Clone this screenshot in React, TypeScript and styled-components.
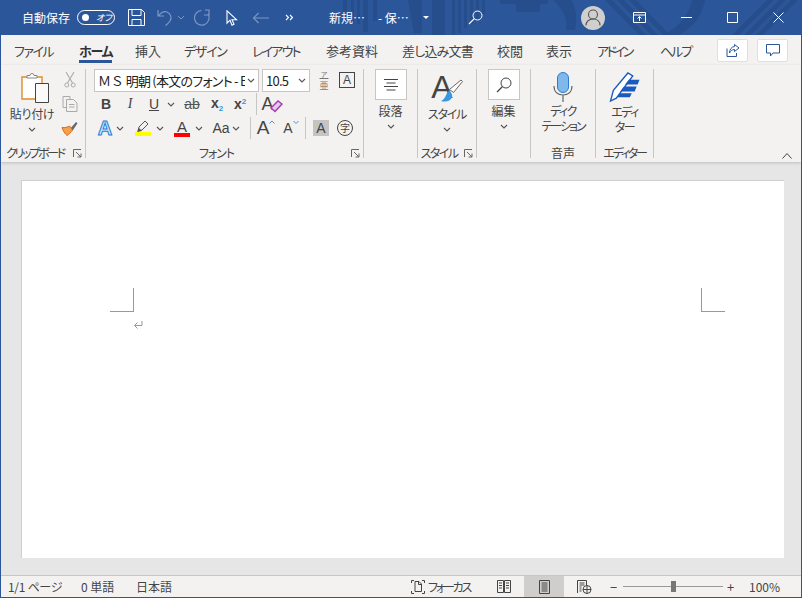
import React from "react";
import styled, { createGlobalStyle } from "styled-components";

const blue = "#2b579a";
const ink = "#444";

const tabs = [
  { label: "ファイル", w: 38, next: 27, ls: -1.5 },
  { label: "ホーム", w: 33, next: 23, ls: -1.3, active: true },
  { label: "挿入", w: 25, next: 24 },
  { label: "デザイン", w: 42, next: 26, ls: -1.25 },
  { label: "レイアウト", w: 48, next: 26, ls: -1.8 },
  { label: "参考資料", w: 52, next: 24 },
  { label: "差し込み文書", w: 71, next: 24, ls: -0.8 },
  { label: "校閲", w: 25, next: 24 },
  { label: "表示", w: 26, next: 25 },
  { label: "アドイン", w: 38, next: 25, ls: -2.7 },
  { label: "ヘルプ", w: 32, next: 0, ls: -2 },
];

const Global = createGlobalStyle`
  html, body { margin: 0; padding: 0; height: 100%; overflow: hidden; }
  body {
    font-family: "Noto Sans CJK JP", "Noto Sans", sans-serif;
    font-feature-settings: "palt";
    color: #444;
  }
`;

const Chevron = () => (
  <svg width="8" height="5" viewBox="0 0 8 5">
    <path d="M1 1l3 3 3-3" fill="none" stroke="#555" strokeWidth="1.1" />
  </svg>
);

const Launcher = () => (
  <svg width="9" height="9" viewBox="0 0 9 9">
    <path d="M.5 8V.5H8M3 3l5 5M8 4.5V8H4.5" fill="none" stroke="#666" />
  </svg>
);

export default function App() {
  return (
    <Window>
      <Global />
      <TitleBar>
        <TitleArt width="472" height="35" viewBox="0 0 472 35">
          <g fill="#264e8c">
            <path d="M13 0h4v24h-4zM21 0h3v24h-3zM27 0h3v24h-3zM33 0h5v32h-5zM43 0h4v21h-4z" />
            <path d="M78 0h14v33h-8zM102 0h13v35h-13z" />
            <path d="M122 0h3v35h-3zM128 0h3v33h-3zM134 0h3v28h-3zM140 0h3v24h-3zM146 0h3v20h-3zM152 0h3v14h-3z" />
            <path d="M170 0h48v4h-8v8h-24v-8h-16z" />
            <path d="M223 0h18c6 8 6 20 4 30h-9c2-10-2-20-13-30z" />
            <path d="M275 0h7l34 35h-7zM287 0h7l34 35h-7zM299 0h7l34 35h-7z" />
            <path d="M362 0h13c-3 16-12 28-26 35h-16c16-8 26-20 29-35z" />
            <path d="M402 35l35-35h7l-35 35zM414 35l35-35h7l-35 35zM426 35l35-35h7l-35 35z" />
          </g>
        </TitleArt>
        <AutoSave>自動保存</AutoSave>
        <Toggle>
          <ToggleKnob />
          <ToggleText>オフ</ToggleText>
        </Toggle>
        <QuickIcon $w={17} $ml={13}>
          <svg width="17" height="17" viewBox="0 0 17 17">
            <path d="M.5.5h13l3 3v13H.5zM4 .5v6h9v-6M4 16.5v-6h9v6" fill="none" stroke="#fff" />
          </svg>
        </QuickIcon>
        <QuickIcon $w={16} $ml={12}>
          <svg width="16" height="17" viewBox="0 0 16 17">
            <path d="M1 1v6h6M1.5 7C4 3.5 7 2 10 3c4 1.5 5 6 3 9-1 1.5-2.5 3-4.5 4.5" fill="none" stroke="#7d97c2" strokeWidth="1.2" />
          </svg>
        </QuickIcon>
        <QuickIcon $w={8} $ml={4}>
          <svg width="8" height="5" viewBox="0 0 8 5">
            <path d="M1 1l3 3 3-3" fill="none" stroke="#7d97c2" />
          </svg>
        </QuickIcon>
        <QuickIcon $w={17} $ml={8}>
          <svg width="17" height="17" viewBox="0 0 17 17">
            <path d="M12 1h4v5h-5M15 5A7.3 7.3 0 1 1 8.5 1.5" fill="none" stroke="#7d97c2" strokeWidth="1.2" />
          </svg>
        </QuickIcon>
        <QuickIcon $w={12} $ml={16}>
          <svg width="12" height="16" viewBox="0 0 12 16">
            <path d="M1 .8v12.4l3-3 2 5 2-1-2-4.5h4.5z" fill="#2b579a" stroke="#fff" strokeWidth="1.1" />
          </svg>
        </QuickIcon>
        <QuickIcon $w={17} $ml={14}>
          <svg width="17" height="12" viewBox="0 0 17 12">
            <path d="M17 6H1.5M6.5 1l-5 5 5 5" fill="none" stroke="#7d97c2" strokeWidth="1.2" />
          </svg>
        </QuickIcon>
        <QuickIcon $w={9} $ml={16}>
          <svg width="9" height="7" viewBox="0 0 9 7">
            <path d="M1 1l2.5 2.5L1 6M5 1l2.5 2.5L5 6" fill="none" stroke="#fff" strokeWidth="1.1" />
          </svg>
        </QuickIcon>
        <DocTitle $w={36} $ml={35}>新規…</DocTitle>
        <DocTitle $w={30} $ml={13}>- 保…</DocTitle>
        <QuickIcon $w={6} $ml={15}>
          <svg width="6" height="3" viewBox="0 0 6 3">
            <path d="M0 0h6L3 3z" fill="#fff" />
          </svg>
        </QuickIcon>
        <QuickIcon $w={15} $ml={39}>
          <svg width="15" height="15" viewBox="0 0 15 15">
            <circle cx="9.5" cy="5.5" r="4.5" fill="none" stroke="#fff" />
            <path d="M6.3 8.7L1 14" stroke="#fff" strokeWidth="1.2" />
          </svg>
        </QuickIcon>
        <Avatar>
          <svg width="16" height="17" viewBox="0 0 16 17">
            <circle cx="8" cy="5.5" r="4.5" fill="none" stroke="#555" strokeWidth="1.1" />
            <path d="M1 16.5c0-4 3-6.5 7-6.5s7 2.5 7 6.5" fill="none" stroke="#555" strokeWidth="1.1" />
          </svg>
        </Avatar>
        <QuickIcon $w={13} $ml={28}>
          <svg width="13" height="11" viewBox="0 0 13 11">
            <path d="M.5.5h12v10H.5zM.5 3h12M6.5 9V4.5M4.5 6.5l2-2 2 2" fill="none" stroke="#fff" />
          </svg>
        </QuickIcon>
        <QuickIcon $w={11} $ml={35}>
          <svg width="11" height="1" viewBox="0 0 11 1">
            <path d="M0 .5h11" stroke="#fff" />
          </svg>
        </QuickIcon>
        <QuickIcon $w={11} $ml={35}>
          <svg width="11" height="11" viewBox="0 0 11 11">
            <path d="M.5.5h10v10H.5z" fill="none" stroke="#fff" />
          </svg>
        </QuickIcon>
        <QuickIcon $w={11} $ml={35}>
          <svg width="11" height="11" viewBox="0 0 11 11">
            <path d="M.5.5l10 10M10.5.5l-10 10" stroke="#fff" />
          </svg>
        </QuickIcon>
      </TitleBar>

      <TabBar>
        {tabs.map((t) => (
          <Tab key={t.label} $w={t.w} $next={t.next} $ls={t.ls} $active={t.active}>
            {t.label}
          </Tab>
        ))}
        <TabActions>
          <WhiteButton>
            <svg width="14" height="14" viewBox="0 0 14 14">
              <path d="M8.5 1.5L13 5 8.5 8.5V6.5C6 6.5 4.5 8 3.5 10 3.5 6.5 5.5 3.8 8.5 3.5zM1 5.5v8h9.5V10" fill="none" stroke="#2b579a" />
            </svg>
          </WhiteButton>
          <WhiteButton>
            <svg width="14" height="14" viewBox="0 0 14 14">
              <path d="M.5 1.5h13V10H7l-2.500 3v-3H.5z" fill="none" stroke="#2b579a" />
            </svg>
          </WhiteButton>
        </TabActions>
      </TabBar>

      <Ribbon>
        <Group $w={84}>
          <GroupBody>
            <ClipboardColumn>
              <ClipIcon>
                <svg width="28" height="30" viewBox="0 0 28 30">
                  <path d="M1 4h20v22H1z" fill="#fff" stroke="#e08a2b" strokeWidth="1.4" />
                  <path d="M6 5V2.5h3a2 2 0 0 1 4 0h3V5z" fill="#fff" stroke="#888" />
                  <path d="M14.5 10.5h13v19h-13z" fill="#fafafa" stroke="#444" />
                </svg>
              </ClipIcon>
              <BigLabel $ls={-0.3}>貼り付け</BigLabel>
              <ChevronRow><Chevron /></ChevronRow>
            </ClipboardColumn>
            <ClipTools>
              <svg width="12" height="17" viewBox="0 0 12 17">
                <path d="M2 1l6.5 11M10 1L3.5 12" stroke="#aaa" strokeWidth="1.1" />
                <circle cx="2.8" cy="14" r="2" fill="none" stroke="#aaa" />
                <circle cx="9.2" cy="14" r="2" fill="none" stroke="#aaa" />
              </svg>
              <svg width="16" height="16" viewBox="0 0 16 16">
                <path d="M1 .5h7v3M1 .5v11h3" fill="none" stroke="#aaa" />
                <path d="M4.5 3.5h7L15 7v8.500H4.500zM7 8.500h5.500M7 11h5.500" fill="#f3f2f1" stroke="#aaa" />
              </svg>
              <svg width="17" height="16" viewBox="0 0 17 16">
                <path d="M9 9l6-7 1.5 1.2-5 7.5z" fill="#666" />
                <path d="M1 7.5c3 .5 6-.5 7.5-1.5l3 4C10 12 8 14.5 6 15.5 4 14 2 10.500 1 7.500z" fill="#f5a04a" stroke="#d9691e" />
              </svg>
            </ClipTools>
          </GroupBody>
          <GroupFooter $ls={-2.3} $pl={4}>
            <span>クリップボード</span>
            <LauncherSlot><Launcher /></LauncherSlot>
          </GroupFooter>
        </Group>

        <Group $w={278}>
          <FontBody>
            <ToolRow>
              <SelectBox $w={165}>
                <SelectText>Ｍ Ｓ  明朝 (本文のフォント - E</SelectText>
                <Chevron />
              </SelectBox>
              <SelectBox $w={48}>
                <SelectText>10.5</SelectText>
                <Chevron />
              </SelectBox>
              <Tool $w={22}>
                <Ruby>
                  <small>ア</small>
                  <span>亜</span>
                </Ruby>
              </Tool>
              <Tool $w={16} $ml={4}><BoxedA>A</BoxedA></Tool>
            </ToolRow>
            <ToolRow>
              <Tool $w={24}><BoldLetter>B</BoldLetter></Tool>
              <Tool $w={24}><ItalicLetter>I</ItalicLetter></Tool>
              <Tool $w={24}><UnderLetter>U</UnderLetter></Tool>
              <Tool $w={10}><Chevron /></Tool>
              <Tool $w={28} $ml={2}><StrikeLetter>ab</StrikeLetter></Tool>
              <Tool $w={22}><BoldLetter>x<Sub>2</Sub></BoldLetter></Tool>
              <Tool $w={24}><BoldLetter>x<Sup>2</Sup></BoldLetter></Tool>
              <VSep $ml={4} />
              <Tool $w={30}>
                <Eraser>
                  <EraserA>A</EraserA>
                  <svg width="13" height="13" viewBox="0 0 13 13">
                    <path d="M1 8l7-7 4 3-7 7.5z" fill="#e7c8ee" stroke="#a23cb0" strokeWidth="1.4" />
                  </svg>
                </Eraser>
              </Tool>
            </ToolRow>
            <ToolRow>
              <Tool $w={22}><OutlineA>A</OutlineA></Tool>
              <Tool $w={8}><Chevron /></Tool>
              <Tool $w={22} $ml={8}>
                <ColorStack>
                  <svg width="15" height="12" viewBox="0 0 15 12">
                    <path d="M2 11l1-4 6-6 3 3-6 6z" fill="none" stroke="#555" />
                    <path d="M1 12l2-4 3 3z" fill="#555" />
                  </svg>
                  <ColorBar $c="#ffff00" />
                </ColorStack>
              </Tool>
              <Tool $w={8} $ml={2}><Chevron /></Tool>
              <Tool $w={22} $ml={7}>
                <ColorStack>
                  <PlainA>A</PlainA>
                  <ColorBar $c="#ff0000" />
                </ColorStack>
              </Tool>
              <Tool $w={8} $ml={2}><Chevron /></Tool>
              <Tool $w={28} $ml={4}><CaseText>Aa</CaseText></Tool>
              <Tool $w={8} $ml={-3}><Chevron /></Tool>
              <VSep $ml={10} />
              <Tool $w={24} $ml={3}>
                <GrowA>A</GrowA>
                <Caret width="6" height="4" viewBox="0 0 6 4"><path d="M.5 3.5L3 1l2.5 2.5" fill="none" stroke="#3a96dd" /></Caret>
              </Tool>
              <Tool $w={22} $ml={2}>
                <ShrinkA>A</ShrinkA>
                <Caret width="6" height="4" viewBox="0 0 6 4"><path d="M.5 1L3 3.5 5.5 1" fill="none" stroke="#3a96dd" /></Caret>
              </Tool>
              <VSep $ml={3} />
              <ShadedA>A</ShadedA>
              <Tool $w={16} $ml={8}><CircleChar>字</CircleChar></Tool>
            </ToolRow>
          </FontBody>
          <GroupFooter $ls={-1} $center $pr={16}>
            <span>フォント</span>
            <LauncherSlot><Launcher /></LauncherSlot>
          </GroupFooter>
        </Group>

        <Group $w={54}>
          <StackBody>
            <IconSquare>
              <svg width="14" height="12" viewBox="0 0 14 12">
                <path d="M0 .5h14M2.5 4h9M0 7.5h14M2.5 11h9" stroke="#444" />
              </svg>
            </IconSquare>
            <BigLabel>段落</BigLabel>
            <ChevronRow><Chevron /></ChevronRow>
          </StackBody>
        </Group>

        <Group $w={59}>
          <StackBody>
            <StyleIcon>
              <StyleA>A</StyleA>
              <svg width="24" height="24" viewBox="0 0 24 24">
                <path d="M22 1l1.5 1.5-9 11-4-3z" fill="#fff" stroke="#666" />
                <path d="M2 22c4 1.5 10 0 11-4 .5-2-.5-4-2.5-6-3.500 0-3 8-8.500 10z" fill="#3a96dd" />
              </svg>
            </StyleIcon>
            <BigLabel $ls={-1.2}>スタイル</BigLabel>
            <ChevronRow><Chevron /></ChevronRow>
          </StackBody>
          <GroupFooter $ls={-1.6} $center $pr={16}>
            <span>スタイル</span>
            <LauncherSlot><Launcher /></LauncherSlot>
          </GroupFooter>
        </Group>

        <Group $w={54}>
          <StackBody>
            <IconSquare>
              <svg width="16" height="16" viewBox="0 0 16 16">
                <circle cx="10" cy="6" r="5" fill="none" stroke="#444" />
                <path d="M6.5 9.5L1 15" stroke="#444" strokeWidth="1.2" />
              </svg>
            </IconSquare>
            <BigLabel>編集</BigLabel>
            <ChevronRow><Chevron /></ChevronRow>
          </StackBody>
        </Group>

        <Group $w={65}>
          <StackBody $pt={3} $gap={1}>
            <svg width="20" height="30" viewBox="0 0 20 30">
              <rect x="4.5" y="0.5" width="11" height="20" rx="5.5" fill="#7fb9ec" stroke="#2b7cd3" />
              <path d="M1 14c0 6 4 9 9 9s9-3 9-9M10 23v7" fill="none" stroke="#666" strokeWidth="1.2" />
            </svg>
            <TwoLine>
              <LineSpan $ls={-1.5}>ディク</LineSpan>
              <LineSpan $ls={-2}>テーション</LineSpan>
            </TwoLine>
          </StackBody>
          <GroupFooter $center><span>音声</span></GroupFooter>
        </Group>

        <Group $w={58}>
          <StackBody $pt={3} $gap={1}>
            <svg width="32" height="31" viewBox="0 0 32 32">
              <path d="M1 30l3-11L19 1l5 3L7 27z" fill="#fff" stroke="#185abd" strokeWidth="1.4" />
              <path d="M20 8h11l-2 5H16zM15 15h13l-2 5H11zM11 22h12l-2 4H8z" fill="#185abd" />
            </svg>
            <TwoLine>
              <LineSpan $ls={-1.5}>エディ</LineSpan>
              <LineSpan $ls={-1.5}>ター</LineSpan>
            </TwoLine>
          </StackBody>
          <GroupFooter $ls={-2.2} $center><span>エディター</span></GroupFooter>
        </Group>

        <Collapse>
          <svg width="10" height="6" viewBox="0 0 10 6">
            <path d="M.5 5.5l4.500-5 4.500 5" fill="none" stroke="#444" />
          </svg>
        </Collapse>
      </Ribbon>

      <Canvas>
        <Page>
          <Margins>
            <CropMark $side="left" />
            <CropMark $side="right" />
          </Margins>
          <ReturnMark>
            <svg width="10" height="9" viewBox="0 0 10 9">
              <path d="M9 1v4.5H2M4.500 2.500l-3 3 3 3" fill="none" stroke="#999" />
            </svg>
          </ReturnMark>
        </Page>
      </Canvas>

      <StatusBar>
        <StatusText $w={73} $ls={-0.3}>1/1 ページ</StatusText>
        <StatusText $w={55}>0 単語</StatusText>
        <StatusText $w={275}>日本語</StatusText>
        <FocusGroup>
          <FocusIcon width="14" height="14" viewBox="0 0 14 14">
            <path d="M.5 3V.5H3M.5 11v2.5H3M11 13.5h2.5V11M13.5 3V.5H11M4 11.500V1.500h4l2.500 2.500v7.500zM7.500 1.500v3h3" fill="none" stroke="#444" />
          </FocusIcon>
          <FocusText>フォーカス</FocusText>
        </FocusGroup>
        <ViewButton>
          <svg width="14" height="13" viewBox="0 0 14 13">
            <path d="M.5.5h6v12h-6zM7.5.5h6v12h-6zM2 3h3M2 5.5h3M2 8h3M9 3h3M9 5.5h3M9 8h3" fill="none" stroke="#444" />
          </svg>
        </ViewButton>
        <ViewButton $active>
          <svg width="11" height="14" viewBox="0 0 11 14">
            <path d="M.5.5h10v13H.5zM2.500 3h6M2.500 5h6M2.500 7h6M2.500 9h6M2.500 11h6" fill="none" stroke="#444" />
          </svg>
        </ViewButton>
        <ViewButton>
          <svg width="15" height="14" viewBox="0 0 15 14">
            <path d="M.5 13V.5h9V6M2.500 3h5M2.500 5h5M2.500 7h2M2.500 9h2M2.500 11h2" fill="none" stroke="#444" />
            <circle cx="10" cy="9.5" r="4" fill="#f3f2f1" stroke="#444" />
            <path d="M6 9.5h8M10 5.5v8" stroke="#444" />
          </svg>
        </ViewButton>
        <ZoomMinus>−</ZoomMinus>
        <Slider>
          <SliderThumb />
        </Slider>
        <ZoomPlus>+</ZoomPlus>
        <ZoomValue>100%</ZoomValue>
      </StatusBar>
    </Window>
  );
}

const Window = styled.div`
  width: 802px;
  height: 598px;
  box-sizing: border-box;
  border: solid ${blue};
  border-width: 0 1px 1px 1px;
  display: flex;
  flex-direction: column;
  background: #e6e6e6;
  overflow: hidden;
`;

const TitleBar = styled.div`
  position: relative;
  height: 35px;
  flex: none;
  display: flex;
  align-items: center;
  margin: 0 -1px;
  padding-left: 22px;
  background: ${blue};
  color: #fff;
  & > *:not(svg) { position: relative; }
`;

const TitleArt = styled.svg`
  position: absolute;
  right: 0;
  top: 0;
`;

const AutoSave = styled.span`
  font-size: 12px;
  width: 48px;
  white-space: nowrap;
`;

const Toggle = styled.div`
  margin-left: 7px;
  width: 38px;
  height: 15px;
  box-sizing: border-box;
  border: 1px solid #fff;
  border-radius: 8px;
  display: flex;
  align-items: center;
  padding-left: 4px;
`;

const ToggleKnob = styled.i`
  width: 7px;
  height: 7px;
  border-radius: 50%;
  background: #fff;
`;

const ToggleText = styled.span`
  font-size: 9px;
  font-style: italic;
  margin-left: 7px;
  white-space: nowrap;
`;

const QuickIcon = styled.div<{ $w: number; $ml: number }>`
  width: ${(p) => p.$w}px;
  margin-left: ${(p) => p.$ml}px;
  flex: none;
  display: flex;
  align-items: center;
  justify-content: center;
`;

const DocTitle = styled.span<{ $ml: number; $w: number }>`
  margin-left: ${(p) => p.$ml}px;
  width: ${(p) => p.$w}px;
  flex: none;
  font-size: 12px;
  white-space: nowrap;
`;

const Avatar = styled.div`
  margin-left: 98px;
  width: 24px;
  height: 24px;
  flex: none;
  border-radius: 50%;
  background: #cfcfcf;
  display: flex;
  align-items: center;
  justify-content: center;
`;

const TabBar = styled.div`
  height: 30px;
  flex: none;
  display: flex;
  align-items: center;
  padding-left: 13px;
  background: #f3f2f1;
`;

const Tab = styled.div<{ $w: number; $next: number; $ls?: number; $active?: boolean }>`
  position: relative;
  width: ${(p) => p.$w}px;
  margin-right: ${(p) => p.$next}px;
  flex: none;
  font-size: 13px;
  letter-spacing: ${(p) => p.$ls ?? 0}px;
  line-height: 31px;
  height: 30px;
  color: ${(p) => (p.$active ? "#333" : ink)};
  font-weight: ${(p) => (p.$active ? 700 : 400)};
  white-space: nowrap;
  &::after {
    content: "";
    display: ${(p) => (p.$active ? "block" : "none")};
    position: absolute;
    left: 0;
    right: 0;
    bottom: 2px;
    height: 3px;
    background: ${blue};
  }
`;

const TabActions = styled.div`
  margin-left: auto;
  margin-right: 13px;
  display: flex;
  gap: 9px;
`;

const WhiteButton = styled.div`
  width: 31px;
  height: 23px;
  box-sizing: border-box;
  background: #fff;
  border: 1px solid #e1dfdd;
  border-radius: 2px;
  display: flex;
  align-items: center;
  justify-content: center;
`;

const Ribbon = styled.div`
  position: relative;
  height: 97px;
  flex: none;
  display: flex;
  padding: 4px 0 4px 1px;
  box-sizing: border-box;
  background: #f3f2f1;
  box-shadow: 0 1px 3px rgba(0, 0, 0, 0.18);
  z-index: 1;
`;

const Group = styled.div<{ $w: number }>`
  width: ${(p) => p.$w}px;
  flex: none;
  box-sizing: border-box;
  border-right: 1px solid #c8c6c4;
  display: flex;
  flex-direction: column;
`;

const GroupBody = styled.div`
  flex: 1;
  display: flex;
`;

const ClipboardColumn = styled.div`
  width: 56px;
  display: flex;
  flex-direction: column;
  align-items: center;
  padding: 4px 0 0 4px;
  box-sizing: border-box;
`;

const ClipIcon = styled.div`
  display: flex;
  margin-left: 5px;
`;

const BigLabel = styled.div<{ $ls?: number }>`
  font-size: 12px;
  letter-spacing: ${(p) => p.$ls ?? 0}px;
  line-height: 16px;
  margin-top: 3px;
  white-space: nowrap;
`;

const ChevronRow = styled.div`
  height: 14px;
  display: flex;
  align-items: center;
  justify-content: center;
`;

const ClipTools = styled.div`
  width: 23px;
  padding-top: 2px;
  display: flex;
  flex-direction: column;
  align-items: center;
  gap: 8px;
`;

const GroupFooter = styled.div<{ $center?: boolean; $ls?: number; $pl?: number; $pr?: number }>`
  position: relative;
  height: 17px;
  flex: none;
  font-size: 12px;
  letter-spacing: ${(p) => p.$ls ?? 0}px;
  line-height: 24px;
  white-space: nowrap;
  text-align: ${(p) => (p.$center ? "center" : "left")};
  padding-left: ${(p) => p.$pl ?? 0}px;
  padding-right: ${(p) => p.$pr ?? 0}px;
`;

const LauncherSlot = styled.span`
  position: absolute;
  right: 3px;
  top: 8px;
  display: flex;
`;

const FontBody = styled.div`
  flex: 1;
  padding-left: 8px;
  display: flex;
  flex-direction: column;
  gap: 2px;
`;

const ToolRow = styled.div`
  height: 22px;
  display: flex;
  align-items: center;
`;

const SelectBox = styled.div<{ $w: number }>`
  width: ${(p) => p.$w}px;
  height: 23px;
  flex: none;
  box-sizing: border-box;
  margin-right: 3px;
  background: #fff;
  border: 1px solid #c8c6c4;
  display: flex;
  align-items: center;
  padding: 0 3px;
  gap: 2px;
`;

const SelectText = styled.span`
  flex: 1;
  min-width: 0;
  overflow: hidden;
  font-size: 13px;
  letter-spacing: -0.75px;
  white-space: pre;
  color: #222;
`;

const Tool = styled.div<{ $w: number; $ml?: number }>`
  width: ${(p) => p.$w}px;
  margin-left: ${(p) => p.$ml ?? 0}px;
  height: 22px;
  flex: none;
  display: flex;
  align-items: center;
  justify-content: center;
`;

const Caret = styled.svg`
  align-self: flex-start;
  margin-top: 3px;
`;

const Ruby = styled.div`
  display: flex;
  flex-direction: column;
  align-items: center;
  color: #777;
  small { font-size: 7px; line-height: 10px; }
  span { font-size: 9px; line-height: 13px; text-decoration: overline; }
`;

const BoxedA = styled.div`
  width: 16px;
  height: 16px;
  box-sizing: border-box;
  border: 1px solid #444;
  font: 12px/14px "Liberation Sans", sans-serif;
  text-align: center;
`;

const BoldLetter = styled.span`
  font: 700 14px "Liberation Sans", sans-serif;
  color: #444;
`;

const ItalicLetter = styled.span`
  font: italic 14px "Liberation Serif", serif;
`;

const UnderLetter = styled.span`
  font: 14px "Liberation Sans", sans-serif;
  text-decoration: underline;
`;

const StrikeLetter = styled.span`
  font: 14px "Liberation Sans", sans-serif;
  text-decoration: line-through;
  color: #555;
`;

const Sub = styled.span`
  font-size: 8px;
  color: #3a96dd;
  vertical-align: -3px;
`;

const Sup = styled.span`
  font-size: 8px;
  color: #3a96dd;
  vertical-align: 5px;
`;

const VSep = styled.div<{ $ml?: number }>`
  width: 1px;
  height: 22px;
  flex: none;
  margin-left: ${(p) => p.$ml ?? 0}px;
  background: #c8c6c4;
`;

const Eraser = styled.div`
  display: flex;
  align-items: flex-end;
`;

const EraserA = styled.span`
  font: 18px/17px "Liberation Sans", sans-serif;
  margin-right: -4px;
`;

const OutlineA = styled.span`
  font: 700 20px "Liberation Sans", sans-serif;
  color: #cfe6f8;
  -webkit-text-stroke: 1px #1b7fd4;
`;

const ColorStack = styled.div`
  display: flex;
  flex-direction: column;
  align-items: center;
`;

const ColorBar = styled.div<{ $c: string }>`
  width: 16px;
  height: 4px;
  background: ${(p) => p.$c};
`;

const PlainA = styled.span`
  font: 15px/13px "Liberation Sans", sans-serif;
  height: 13px;
`;

const CaseText = styled.span`
  font: 14px "Liberation Sans", sans-serif;
`;

const GrowA = styled.span`
  font: 19px "Liberation Sans", sans-serif;
`;

const ShrinkA = styled.span`
  font: 14px "Liberation Sans", sans-serif;
`;

const ShadedA = styled.div`
  width: 16px;
  height: 16px;
  margin-left: 7px;
  flex: none;
  background: #c4c4c4;
  font: 14px/16px "Liberation Sans", sans-serif;
  text-align: center;
`;

const CircleChar = styled.div`
  width: 14px;
  height: 14px;
  border: 1px solid #444;
  border-radius: 50%;
  font-size: 10px;
  line-height: 14px;
  text-align: center;
`;

const StackBody = styled.div<{ $gap?: number; $pt?: number }>`
  flex: 1;
  display: flex;
  flex-direction: column;
  align-items: center;
  padding-top: ${(p) => p.$pt ?? 0}px;
  gap: ${(p) => p.$gap ?? 0}px;
`;

const IconSquare = styled.div`
  width: 32px;
  height: 31px;
  box-sizing: border-box;
  background: #fff;
  border: 1px solid #c8c6c4;
  display: flex;
  align-items: center;
  justify-content: center;
`;

const StyleIcon = styled.div`
  height: 34px;
  display: flex;
  align-items: flex-end;
`;

const StyleA = styled.span`
  font: 32px/32px "Liberation Sans", sans-serif;
  margin-right: -14px;
  color: #444;
`;

const TwoLine = styled.div`
  font-size: 12px;
  line-height: 15px;
  text-align: center;
  white-space: nowrap;
`;

const LineSpan = styled.div<{ $ls: number }>`
  letter-spacing: ${(p) => p.$ls}px;
`;

const Collapse = styled.div`
  position: absolute;
  right: 9px;
  bottom: 3px;
  display: flex;
`;

const Canvas = styled.div`
  flex: 1;
  min-height: 0;
  padding: 18px 17px 17px 20px;
  display: flex;
`;

const Page = styled.div`
  flex: 1;
  background: #fff;
  border-top: 1px solid #cfcfcf;
  border-left: 1px solid #cfcfcf;
  padding: 107px 59px 0 88px;
`;

const Margins = styled.div`
  height: 23px;
  display: flex;
  justify-content: space-between;
`;

const CropMark = styled.div<{ $side: "left" | "right" }>`
  width: 23px;
  height: 23px;
  border-bottom: 1px solid #999;
  border-${(p) => (p.$side === "left" ? "right" : "left")}: 1px solid #999;
`;

const ReturnMark = styled.div`
  display: flex;
  margin: 9px 0 0 23px;
`;

const StatusBar = styled.div`
  height: 22px;
  flex: none;
  box-sizing: border-box;
  border-top: 1px solid #c8c6c4;
  background: #f3f2f1;
  display: flex;
  align-items: center;
  padding-left: 7px;
  font-size: 12px;
`;

const StatusText = styled.span<{ $w: number; $ls?: number }>`
  width: ${(p) => p.$w}px;
  flex: none;
  letter-spacing: ${(p) => p.$ls ?? 0}px;
  white-space: nowrap;
`;

const FocusGroup = styled.div`
  display: flex;
  align-items: center;
  gap: 3px;
  white-space: nowrap;
  width: 73px;
  flex: none;
`;

const FocusIcon = styled.svg`
  flex: none;
`;

const FocusText = styled.span`
  letter-spacing: -2.2px;
`;

const ViewButton = styled.div<{ $active?: boolean }>`
  width: 40px;
  height: 21px;
  flex: none;
  background: ${(p) => (p.$active ? "#cfcecd" : "transparent")};
  display: flex;
  align-items: center;
  justify-content: center;
`;

const ZoomMinus = styled.span`
  margin-left: 6px;
  width: 13px;
  flex: none;
  font-size: 13px;
`;

const Slider = styled.div`
  position: relative;
  width: 100px;
  height: 1px;
  flex: none;
  background: #999;
`;

const SliderThumb = styled.div`
  position: absolute;
  left: 48px;
  top: -5px;
  width: 5px;
  height: 11px;
  background: #777;
`;

const ZoomPlus = styled.span`
  margin-left: 4px;
  width: 14px;
  flex: none;
  font-size: 13px;
`;

const ZoomValue = styled.span`
  margin-left: 8px;
  white-space: nowrap;
`;
